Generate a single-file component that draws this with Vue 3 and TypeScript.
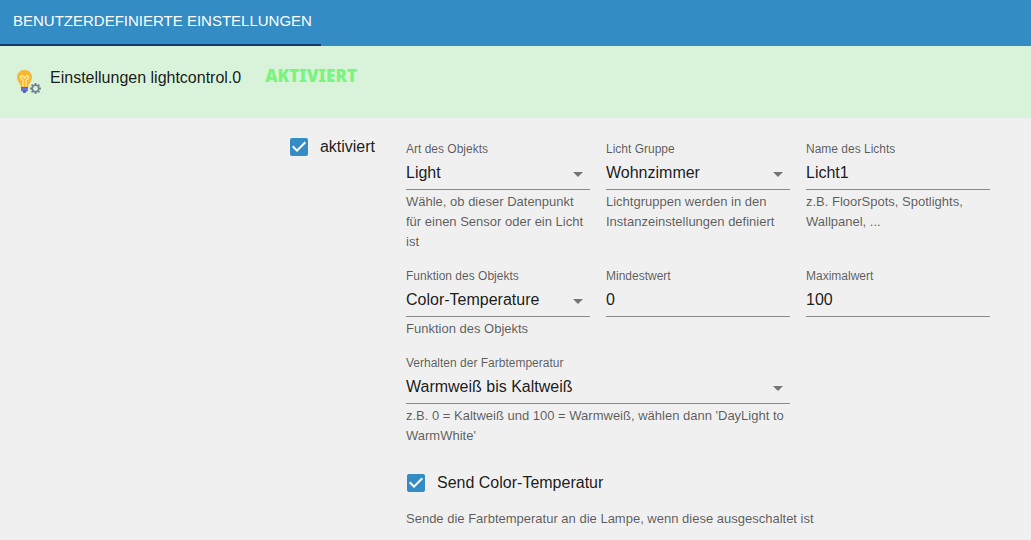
<script setup lang="ts">
import { ref } from 'vue'

interface Field {
  id: string
  label: string
  value: string
  options?: string[]
  helper?: string
  wide?: boolean
}

const enabled = ref(true)
const sendColorTemperature = ref(true)

const fields = ref<Field[]>([
  {
    id: 'type',
    label: 'Art des Objekts',
    value: 'Light',
    options: ['Light', 'Sensor'],
    helper: 'Wähle, ob dieser Datenpunkt für einen Sensor oder ein Licht ist',
  },
  {
    id: 'group',
    label: 'Licht Gruppe',
    value: 'Wohnzimmer',
    options: ['Wohnzimmer'],
    helper: 'Lichtgruppen werden in den Instanzeinstellungen definiert',
  },
  {
    id: 'name',
    label: 'Name des Lichts',
    value: 'Licht1',
    helper: 'z.B. FloorSpots, Spotlights, Wallpanel, ...',
  },
  {
    id: 'function',
    label: 'Funktion des Objekts',
    value: 'Color-Temperature',
    options: ['Color-Temperature'],
    helper: 'Funktion des Objekts',
  },
  { id: 'min', label: 'Mindestwert', value: '0' },
  { id: 'max', label: 'Maximalwert', value: '100' },
  {
    id: 'behaviour',
    label: 'Verhalten der Farbtemperatur',
    value: 'Warmweiß bis Kaltweiß',
    options: ['Warmweiß bis Kaltweiß', 'Kaltweiß bis Warmweiß'],
    helper: "z.B. 0 = Kaltweiß und 100 = Warmweiß, wählen dann 'DayLight to WarmWhite'",
    wide: true,
  },
])
</script>

<template>
  <div class="page">
    <header class="tabs">
      <button class="tab" type="button">Benutzerdefinierte Einstellungen</button>
    </header>

    <section class="instance">
      <svg class="logo" viewBox="0 0 28 28" aria-hidden="true">
        <path d="M9.500 1C4.900 1 2 4.300 2 8.300c0 3.500 2 5 3.200 7.200.4.700.5 1.500.5 2.500h7.600c0-1 .1-1.800.5-2.500C15 13.300 17 11.800 17 8.300 17 4.300 14.100 1 9.500 1z" fill="#fbb52f" />
        <path d="M8 17.500v-6.200L5.600 9c-.6-2 1.500-3 2.600-1.700L9.500 9l1.300-1.700C11.900 6 14 7 13.400 9L11 11.300v6.200" fill="none" stroke="#fff0a3" stroke-width="1.300" stroke-linejoin="round" />
        <path d="M6 18h7v3.500l-1.800 1.300-.6 1.200H8.400l-.6-1.200L6 21.500z" fill="#5c62c5" />
        <path d="M6 20.200h7" stroke="#8c83d8" stroke-width="1" />
        <g stroke="#71818f" fill="none">
          <path d="M20.500 14v11M15 19.500h11M16.600 15.600l7.800 7.800M16.600 23.400l7.800-7.800" stroke-width="1.800" />
          <circle cx="20.500" cy="19.500" r="3.300" fill="#d9f2da" stroke-width="1.700" />
        </g>
      </svg>
      <h1 class="title">Einstellungen lightcontrol.0</h1>
      <span class="status">AKTIVIERT</span>
    </section>

    <main class="form">
      <label class="check enable">
        <input v-model="enabled" type="checkbox" />
        <span>aktiviert</span>
      </label>

      <div class="fields">
        <div v-for="field in fields" :key="field.id" class="field" :class="{ wide: field.wide }">
          <label class="label" :for="field.id">{{ field.label }}</label>
          <div class="control">
            <template v-if="field.options">
              <select :id="field.id" v-model="field.value">
                <option v-for="option in field.options" :key="option">{{ option }}</option>
              </select>
              <svg class="arrow" viewBox="0 0 24 24" aria-hidden="true">
                <path d="M7 10l5 5 5-5z" fill="currentColor" />
              </svg>
            </template>
            <input v-else :id="field.id" v-model="field.value" type="text" />
          </div>
          <p v-if="field.helper" class="helper">{{ field.helper }}</p>
        </div>

        <div class="send">
          <label class="check">
            <input v-model="sendColorTemperature" type="checkbox" />
            <span>Send Color-Temperatur</span>
          </label>
          <p class="helper">Sende die Farbtemperatur an die Lampe, wenn diese ausgeschaltet ist</p>
        </div>
      </div>
    </main>
  </div>
</template>

<style>
body {
  margin: 0;
  background: #f0f0f0;
}
</style>

<style scoped>
.page {
  font-family: "Liberation Sans", Arial, sans-serif;
  color: rgba(0, 0, 0, 0.9);
}

.tabs {
  display: flex;
  background: #338cc3;
}

.tab {
  height: 46px;
  padding: 0 9px 2px 13px;
  border: 0;
  border-bottom: 2px solid #16376b;
  background: none;
  color: #fff;
  font: 15px/24px "Liberation Sans", Arial, sans-serif;
  text-transform: uppercase;
}

.instance {
  display: flex;
  align-items: flex-start;
  min-height: 56px;
  padding: 16px 16px 0 15px;
  background: #d9f2da;
}

.logo {
  width: 28px;
  height: 28px;
  margin-top: 7px;
}

.title {
  margin: 4px 24px 0 7px;
  font-size: 16px;
  font-weight: 400;
  line-height: 24px;
}

.status {
  margin-top: 2px;
  color: #7af57c;
  font: 900 17px/24px "Noto Sans", sans-serif;
}

.form {
  display: grid;
  grid-template-columns: repeat(5, minmax(0, 1fr));
  column-gap: 16px;
  padding: 17px 41px 8px 6px;
}

.check {
  display: flex;
  align-items: center;
  gap: 12px;
  font-size: 16px;
  line-height: 24px;
}

.check input {
  appearance: none;
  flex: none;
  width: 18px;
  height: 18px;
  margin: 0;
  border-radius: 2px;
  border: 2px solid #757575;
}

.check input:checked {
  border: 0;
  background: #338cc3 url("data:image/svg+xml,%3Csvg xmlns='http://www.w3.org/2000/svg' viewBox='3 3 18 18'%3E%3Cpath d='M10 17l-5-5 1.410-1.410L10 14.170l7.590-7.590L19 8z' fill='white'/%3E%3C/svg%3E") center / 18px no-repeat;
}

.enable {
  grid-column: 1 / 3;
  align-self: start;
  justify-self: end;
  margin-right: 15px;
}

.fields {
  grid-column: 3 / 6;
  display: grid;
  grid-template-columns: repeat(3, minmax(0, 1fr));
  gap: 16px;
  padding-top: 6px;
}

.wide {
  grid-column: span 2;
}

.label {
  display: block;
  color: rgba(0, 0, 0, 0.64);
  font-size: 12px;
  line-height: 16px;
}

.control {
  position: relative;
  border-bottom: 1px solid #8b8b8b;
}

.control select,
.control input {
  display: block;
  appearance: none;
  box-sizing: border-box;
  width: 100%;
  height: 32px;
  margin: 0;
  padding: 0;
  border: 0;
  border-radius: 0;
  outline: 0;
  background: none;
  color: inherit;
  font: 16px/32px "Liberation Sans", Arial, sans-serif;
}

.arrow {
  position: absolute;
  top: 5px;
  right: 0;
  width: 24px;
  height: 24px;
  color: #757575;
  pointer-events: none;
}

.helper {
  margin: 2px 0 0;
  color: rgba(0, 0, 0, 0.64);
  font-size: 13px;
  line-height: 20px;
}

.send {
  grid-column: 1 / -1;
  padding: 9px 0 0 1px;
}

.send .helper {
  margin: 14px 0 0 -1px;
}
</style>
